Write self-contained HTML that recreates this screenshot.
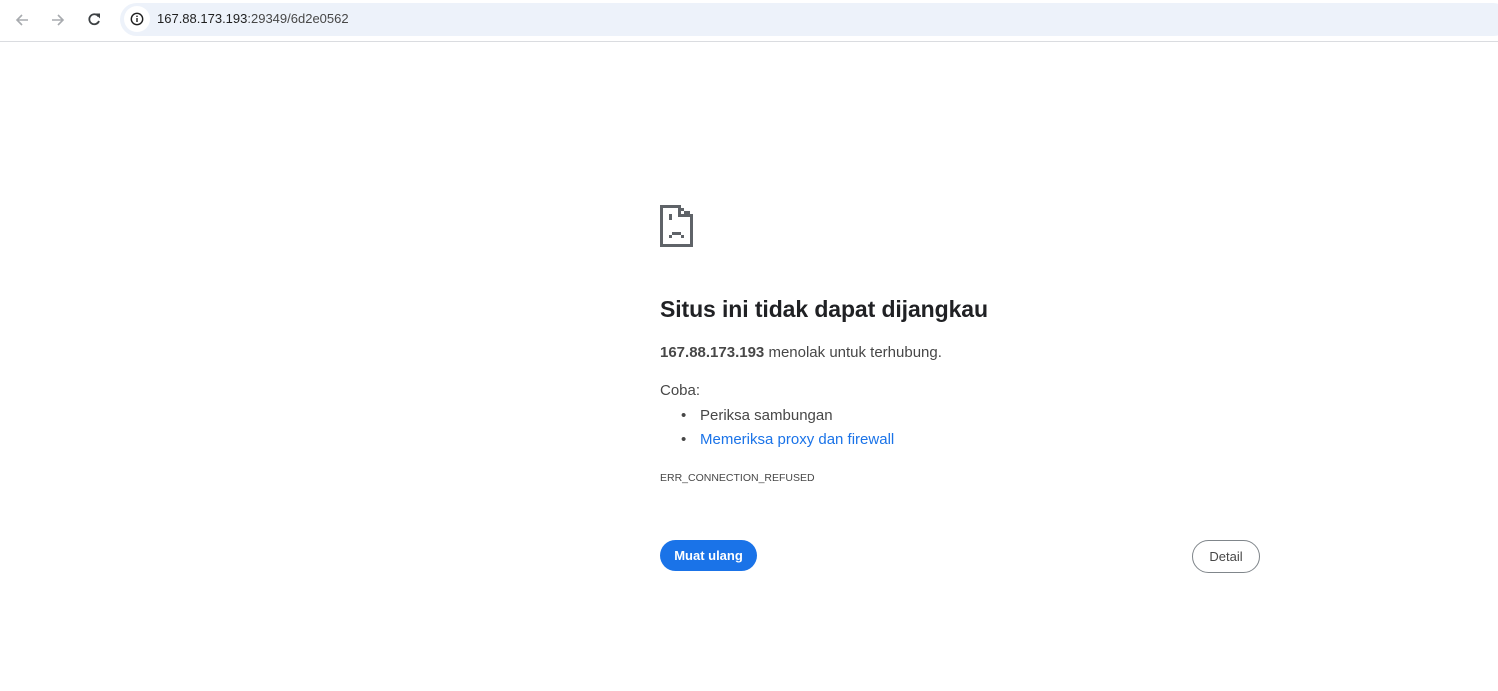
<!DOCTYPE html>
<html><head><meta charset="utf-8"><style>
*{margin:0;padding:0;box-sizing:border-box}
body{width:1498px;height:691px;background:#fff;font-family:"Liberation Sans",sans-serif;position:relative;overflow:hidden;color:#202124}
.top{position:absolute;left:0;top:0;width:1498px;height:42px;background:#fff;border-bottom:1px solid #dadce0}
.omni{position:absolute;left:120px;top:3px;width:1390px;height:33px;background:#edf2fa;border-radius:17px}
.url{position:absolute;left:157px;top:11px;font-size:13px;color:#1f1f1f}
.ab{position:absolute}
.t{position:absolute;left:660px;white-space:nowrap}
</style></head><body>
<div class="top">
<svg class="ab" style="left:13px;top:11px" width="18" height="18" viewBox="0 0 18 18"><path d="M15 9H4M9 4L4 9l5 5" stroke="#a8abaf" stroke-width="1.6" fill="none"/></svg>
<svg class="ab" style="left:49px;top:11px" width="18" height="18" viewBox="0 0 18 18"><path d="M3 9h11M9 4l5 5-5 5" stroke="#a8abaf" stroke-width="1.6" fill="none"/></svg>
<svg class="ab" style="left:85px;top:10px" width="18" height="18" viewBox="0 0 18 18"><path d="M13.5 6.5A5 5 0 1 0 14 11" stroke="#3c4043" stroke-width="1.8" fill="none"/><path d="M10 3.5h5v5z" fill="#3c4043"/></svg>
<div class="omni"></div>
<div class="ab" style="left:124px;top:6px;width:26px;height:26px;border-radius:13px;background:#fff"></div>
<svg class="ab" style="left:130px;top:12px" width="14" height="14" viewBox="0 0 14 14"><circle cx="7" cy="7" r="5.7" stroke="#1f1f1f" stroke-width="1.4" fill="none"/><rect x="6.3" y="6" width="1.4" height="4" fill="#1f1f1f"/><rect x="6.3" y="3.6" width="1.4" height="1.4" fill="#1f1f1f"/></svg>
<div class="url">167.88.173.193<span style="color:#474747">:29349/6d2e0562</span></div>
</div>
<svg class="ab" style="left:660px;top:205px" width="34" height="42" viewBox="0 0 34 42" shape-rendering="crispEdges">
<g fill="#5f6368">
<rect x="0" y="0" width="3" height="42"/><rect x="0" y="39" width="33" height="3"/><rect x="0" y="0" width="18" height="3"/>
<rect x="30" y="12" width="3" height="30"/><rect x="18" y="0" width="3" height="12"/><rect x="18" y="9" width="15" height="3"/>
<rect x="21" y="3" width="3" height="3"/><rect x="24" y="6" width="3" height="3"/><rect x="27" y="6" width="3" height="3"/><rect x="30" y="9" width="3" height="3"/>
<rect x="9" y="9" width="3" height="6"/>
<rect x="12" y="27" width="9" height="3"/><rect x="9" y="30" width="3" height="3"/><rect x="21" y="30" width="3" height="3"/>
</g></svg>
<div class="t" style="top:296px;font-size:23px;font-weight:bold;color:#202124;letter-spacing:-0.1px">Situs ini tidak dapat dijangkau</div>
<div class="t" style="top:344px;font-size:15px;color:#474747"><b>167.88.173.193</b> menolak untuk terhubung.</div>
<div class="t" style="top:382px;font-size:15px;color:#474747">Coba:</div>
<div class="t" style="left:681px;top:407px;font-size:15px;color:#474747">•</div>
<div class="t" style="left:700px;top:407px;font-size:15px;color:#474747">Periksa sambungan</div>
<div class="t" style="left:681px;top:431px;font-size:15px;color:#474747">•</div>
<div class="t" style="left:700px;top:431px;font-size:15px;color:#1a73e8">Memeriksa proxy dan firewall</div>
<div class="t" style="top:472px;font-size:10.5px;color:#474747">ERR_CONNECTION_REFUSED</div>
<div class="ab" style="left:660px;top:540px;width:97px;height:31px;border-radius:16px;background:#1a73e8;color:#fff;font-size:13px;font-weight:bold;text-align:center;line-height:31px">Muat ulang</div>
<div class="ab" style="left:1192px;top:540px;width:68px;height:33px;border-radius:17px;border:1px solid #80868b;color:#474747;font-size:13px;text-align:center;line-height:31px">Detail</div>
</body></html>
